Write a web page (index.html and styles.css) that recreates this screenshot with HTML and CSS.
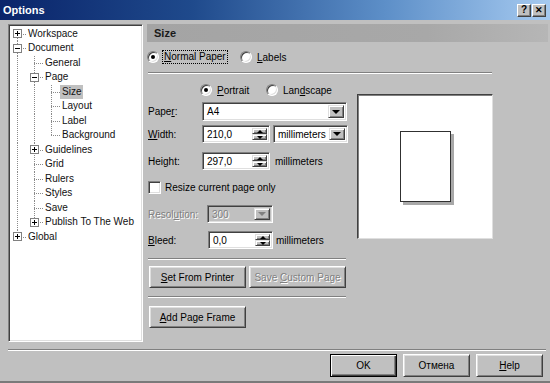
FILE: index.html
```html
<!DOCTYPE html>
<html>
<head>
<meta charset="utf-8">
<link rel="stylesheet" href="styles.css">
</head>
<body>
<div class="window">
  <div class="titlebar">
    <span class="title">Options</span>
    <div class="tbtns"><span class="tbtn">?</span><span class="tbtn x">✕</span></div>
  </div>
  <div class="main">
    <div class="tree">
      <div class="row"><span class="cell c first"><span class="exp plus"></span></span><span class="lbl">Workspace</span></div>
      <div class="row"><span class="cell c"><span class="exp"></span></span><span class="lbl">Document</span></div>
      <div class="row"><span class="cell g"></span><span class="cell c"></span><span class="lbl">General</span></div>
      <div class="row"><span class="cell g"></span><span class="cell c"><span class="exp"></span></span><span class="lbl">Page</span></div>
      <div class="row"><span class="cell g"></span><span class="cell g"></span><span class="cell c"></span><span class="lbl sel">Size</span></div>
      <div class="row"><span class="cell g"></span><span class="cell g"></span><span class="cell c"></span><span class="lbl">Layout</span></div>
      <div class="row"><span class="cell g"></span><span class="cell g"></span><span class="cell c"></span><span class="lbl">Label</span></div>
      <div class="row"><span class="cell g"></span><span class="cell g"></span><span class="cell c last"></span><span class="lbl">Background</span></div>
      <div class="row"><span class="cell g"></span><span class="cell c"><span class="exp plus"></span></span><span class="lbl">Guidelines</span></div>
      <div class="row"><span class="cell g"></span><span class="cell c"></span><span class="lbl">Grid</span></div>
      <div class="row"><span class="cell g"></span><span class="cell c"></span><span class="lbl">Rulers</span></div>
      <div class="row"><span class="cell g"></span><span class="cell c"></span><span class="lbl">Styles</span></div>
      <div class="row"><span class="cell g"></span><span class="cell c"></span><span class="lbl">Save</span></div>
      <div class="row"><span class="cell g"></span><span class="cell c last"><span class="exp plus"></span></span><span class="lbl">Publish To The Web</span></div>
      <div class="row"><span class="cell c last"><span class="exp plus"></span></span><span class="lbl">Global</span></div>
    </div>
    <div class="panel">
      <div class="phead">Size</div>
      <div class="typerow">
        <div class="opt w-normal"><span class="radio on"></span><span class="focus"><u>N</u>ormal Paper</span></div>
        <div class="opt"><span class="radio"></span><span><u>L</u>abels</span></div>
      </div>
      <div class="sep wide"></div>
      <div class="body">
        <div class="controls">
          <div class="orient">
            <div class="opt w-portrait"><span class="radio on"></span><span><u>P</u>ortrait</span></div>
            <div class="opt"><span class="radio"></span><span>Lan<u>d</u>scape</span></div>
          </div>
          <div class="frow r-paper">
            <span class="flabel">Pape<u>r</u>:</span>
            <div class="combo w-paper"><span class="val">A4</span><span class="ddbtn"></span></div>
          </div>
          <div class="frow r-width">
            <span class="flabel"><u>W</u>idth:</span>
            <div class="spinbox w-spin"><span class="val">210,0</span><span class="spin"><span class="sbtn up"></span><span class="sbtn down"></span></span></div>
            <div class="combo w-units"><span class="val">millimeters</span><span class="ddbtn"></span></div>
          </div>
          <div class="frow r-height">
            <span class="flabel">Hei<u>g</u>ht:</span>
            <div class="spinbox w-spin"><span class="val">297,0</span><span class="spin"><span class="sbtn up"></span><span class="sbtn down"></span></span></div>
            <span class="unit">millimeters</span>
          </div>
          <div class="frow r-check">
            <span class="check"></span><span>Resize current page only</span>
          </div>
          <div class="frow r-res">
            <span class="flabel wl-res dis">Resol<u>u</u>tion:</span>
            <div class="combo disabled w-res"><span class="val dis">300</span><span class="ddbtn off"></span></div>
          </div>
          <div class="frow r-bleed">
            <span class="flabel wl-bleed"><u>B</u>leed:</span>
            <div class="spinbox w-bleed"><span class="val">0,0</span><span class="spin"><span class="sbtn up"></span><span class="sbtn down"></span></span></div>
            <span class="unit u-bleed">millimeters</span>
          </div>
          <div class="sep short s1"></div>
          <div class="btnrow">
            <span class="btn wide-btn"><span><u>S</u>et From Printer</span></span>
            <span class="btn wide-btn dis"><span>Save <u>C</u>ustom Page</span></span>
          </div>
          <div class="sep short s2"></div>
          <div class="btnrow r-frame">
            <span class="btn wide-btn"><span><u>A</u>dd Page Frame</span></span>
          </div>
        </div>
        <div class="preview"><div class="sheet"></div></div>
      </div>
    </div>
  </div>
  <div class="sep bsep"></div>
  <div class="btnbar">
    <span class="btn dbtn default">OK</span>
    <span class="btn dbtn">Отмена</span>
    <span class="btn dbtn"><span><u>H</u>elp</span></span>
  </div>
</div>
</body>
</html>
```
FILE: styles.css
```css
* { box-sizing: border-box; }
html, body { margin: 0; padding: 0; }
body {
  width: 550px; height: 383px; overflow: hidden;
  background: #c0c0c0;
  font-family: "Liberation Sans", Arial, sans-serif;
  font-size: 10px; color: #000;
}
u { text-decoration: underline; text-underline-offset: 1px; }
.window { height: 383px; display: flex; flex-direction: column; border-bottom: 2px solid #7a7a7a; }

/* title bar */
.titlebar {
  height: 20px; flex: none; display: flex; align-items: center; justify-content: space-between;
  padding: 0 4px 0 3px;
  background: linear-gradient(to right, #0a246a 0%, #1f4a8c 35%, #5d8fc8 70%, #a6caf0 100%);
}
.title { color: #fff; font-weight: bold; font-size: 11px; }
.tbtns { display: flex; gap: 1px; }
.tbtn {
  width: 14px; height: 13px; background: #c0c0c0;
  border: 1px solid; border-color: #fff #404040 #404040 #fff;
  box-shadow: inset -1px -1px #808080;
  display: flex; align-items: center; justify-content: center;
  font-weight: bold; font-size: 10px; line-height: 1;
}
.tbtn.x { font-size: 9px; }

/* main */
.main { display: flex; gap: 3px; padding: 4px 2px 0 8px; height: 322px; flex: none; }
.tree {
  width: 135px; height: 318px; background: #fff; flex: none;
  border: 1px solid; border-color: #808080 #fff #fff #808080;
  box-shadow: inset 1px 1px #404040, inset -1px -1px #dfdfdf;
  padding-top: 1.5px;
}
.row { display: flex; height: 14.5px; }
.cell { width: 17px; flex: none; display: flex; align-items: center; justify-content: center; background-repeat: no-repeat; }
.g {
  background-image: repeating-linear-gradient(to bottom, #8a8a8a 0 1px, transparent 1px 2px);
  background-position: 8px 0; background-size: 1px 100%;
}
.c {
  background-image: repeating-linear-gradient(to bottom, #8a8a8a 0 1px, transparent 1px 2px),
                    repeating-linear-gradient(to right, #8a8a8a 0 1px, transparent 1px 2px);
  background-position: 8px 0, 8px 7px;
  background-size: 1px 100%, 9px 1px;
}
.c.last { background-size: 1px 7px, 9px 1px; }
.c.first { background-position: 8px 100%, 8px 7px; background-size: 1px 7px, 9px 1px; }
.exp {
  width: 9px; height: 9px; border: 1px solid #808080;
  background: linear-gradient(#000, #000) center / 5px 1px no-repeat, #fff;
}
.exp.plus {
  background: linear-gradient(#000, #000) center / 5px 1px no-repeat,
              linear-gradient(#000, #000) center / 1px 5px no-repeat, #fff;
}
.lbl { padding: 0 2px; line-height: 14px; height: 14px; white-space: nowrap; align-self: center; color: #111; }
.lbl.sel { background: #c0c0c0; }

/* panel */
.panel { width: 402px; display: flex; flex-direction: column; }
.phead {
  height: 18px; margin-left: 1px; padding-left: 7px;
  background: linear-gradient(to right, #a4a4a4, #a8a8a8 70%, #b6b6b6);
  font-weight: bold; font-size: 11px; color: #1a1a1a;
  display: flex; align-items: center;
}
.typerow { display: flex; align-items: center; height: 14px; margin-top: 8px; padding-left: 1px; }
.opt { display: flex; align-items: center; gap: 5px; white-space: nowrap; }
.w-normal { width: 93px; gap: 3px; }
.w-portrait { width: 66px; }
.radio {
  width: 12px; height: 12px; border-radius: 50%; flex: none; background: #fff;
  border: 1px solid; border-color: #808080 #fff #fff #808080;
  box-shadow: inset 1px 1px #404040, inset -1px -1px #dfdfdf;
  display: flex; align-items: center; justify-content: center;
}
.radio.on::after { content: ""; width: 4px; height: 4px; border-radius: 50%; background: #000; }
.focus { border: 1px dotted #000; padding: 0 1px; line-height: 12px; }

.sep { height: 2px; border-top: 1px solid #808080; border-bottom: 1px solid #fff; flex: none; }
.sep.wide { margin: 8px 0 0 2px; width: 344px; }

.body { display: flex; }
.controls { width: 202px; padding-left: 2px; display: flex; flex-direction: column; flex: none; }
.orient { display: flex; align-items: center; height: 14px; margin-top: 9px; padding-left: 52px; }
.frow { display: flex; align-items: center; white-space: nowrap; }
.flabel { width: 54px; flex: none; }
.wl-res { width: 59px; }
.wl-bleed { width: 60px; }
.r-paper { margin-top: 5px; height: 19px; }
.r-width { margin-top: 4px; height: 18px; }
.r-height { margin-top: 9px; height: 18px; }
.r-check { margin-top: 11px; height: 13px; gap: 4px; }
.r-res { margin-top: 11px; height: 18px; }
.r-bleed { margin-top: 8px; height: 18px; }

.combo, .spinbox {
  display: flex; align-items: stretch; height: 100%; background: #fff; padding: 2px;
  border: 1px solid; border-color: #808080 #fff #fff #808080;
  box-shadow: inset 1px 1px #404040, inset -1px -1px #dfdfdf;
}
.combo.disabled { background: #c0c0c0; }
.val { flex: 1; padding-left: 2px; display: flex; align-items: center; }
.w-paper { width: 145px; }
.w-units { width: 75px; margin-left: 3px; }
.w-spin { width: 68px; }
.w-res { width: 66px; }
.w-bleed { width: 65px; }
.ddbtn, .sbtn {
  width: 16px; flex: none; background: #c0c0c0;
  border: 1px solid; border-color: #dfdfdf #404040 #404040 #dfdfdf;
  box-shadow: inset 1px 1px #fff, inset -1px -1px #808080;
  display: flex; align-items: center; justify-content: center;
}
.ddbtn::after { content: ""; border-left: 4px solid transparent; border-right: 4px solid transparent; border-top: 4px solid #000; }
.ddbtn.off::after { border-top-color: #808080; }
.spin { display: flex; flex-direction: column; width: 15px; flex: none; }
.sbtn { width: 15px; flex: 1; }
.sbtn.up::after { content: ""; border-left: 3px solid transparent; border-right: 3px solid transparent; border-bottom: 3px solid #000; }
.sbtn.down::after { content: ""; border-left: 3px solid transparent; border-right: 3px solid transparent; border-top: 3px solid #000; }
.unit { margin-left: 5px; }
.u-bleed { margin-left: 3px; }
.check {
  width: 13px; height: 13px; background: #fff; flex: none;
  border: 1px solid; border-color: #808080 #fff #fff #808080;
  box-shadow: inset 1px 1px #404040, inset -1px -1px #dfdfdf;
}
.dis { color: #808080; text-shadow: 1px 1px 0 #fff; }

.sep.short { width: 198px; }
.s1 { margin-top: 9px; }
.s2 { margin-top: 8px; }
.btnrow { display: flex; gap: 3px; margin-top: 6px; padding-left: 1px; }
.r-frame { margin-top: 8px; }
.btn {
  height: 22px; background: #c0c0c0;
  border: 1px solid; border-color: #fff #404040 #404040 #fff;
  box-shadow: inset 1px 1px #dfdfdf, inset -1px -1px #808080;
  display: flex; align-items: center; justify-content: center; white-space: nowrap;
}
.wide-btn { width: 97px; }

.preview {
  width: 136px; height: 145px; margin: 20px 0 0 9px; background: #fff; flex: none;
  border: 1px solid; border-color: #404040 #dfdfdf #dfdfdf #404040;
  box-shadow: inset 1px 1px #808080;
  display: flex; align-items: center; justify-content: center;
}
.sheet { width: 51px; height: 71px; background: #fff; border: 1px solid #303030; box-shadow: 3px 3px 0 #a8a8a8; }

/* bottom */
.bsep { margin: 7px 4px 0 8px; }
.btnbar { display: flex; justify-content: flex-end; gap: 6px; padding-right: 7px; margin-top: 3px; }
.dbtn { width: 67px; height: 23px; }
.default {
  border: 1px solid #000;
  box-shadow: inset 1px 1px #fff, inset -1px -1px #404040, inset -2px -2px #808080;
}
```
